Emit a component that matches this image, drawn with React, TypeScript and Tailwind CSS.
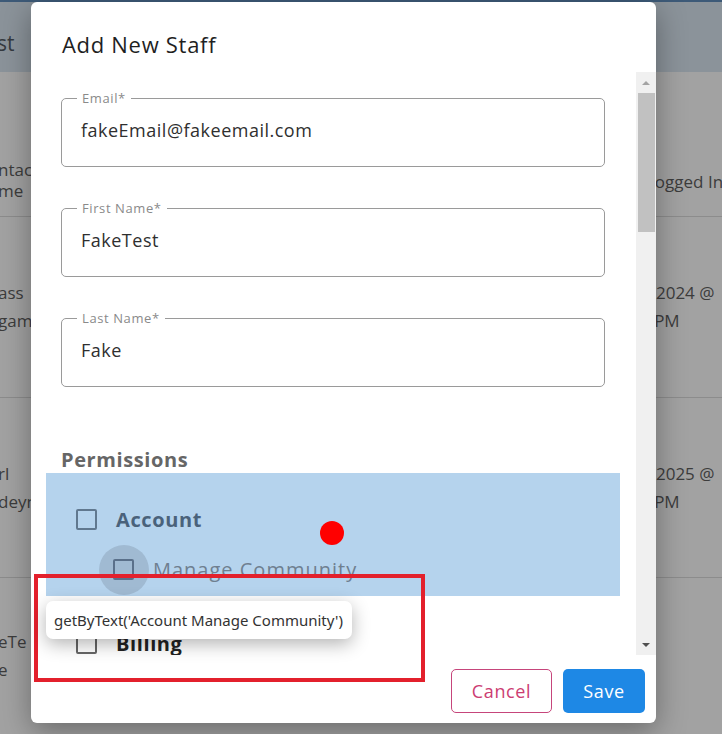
import React from "react";

const font = { fontFamily: '"Open Sans", "Noto Sans", sans-serif' };

const Field: React.FC<{ label: string; value: string }> = ({ label, value }) => (
  <div className="relative h-[69px] rounded-[5px] border border-[#9a9a9a] flex items-center pl-[19px]">
    <span className="absolute -top-[9px] left-[15px] px-[5px] bg-white text-[13px] leading-[16px] tracking-[0.6px] text-[#8a8a8a]">
      {label}
    </span>
    <span className="text-[18px] tracking-[0.5px] text-[#2f2f2f] -mt-[5px]">{value}</span>
  </div>
);

const Checkbox: React.FC<{ tone?: string }> = ({ tone = "border-[#666]" }) => (
  <span className={`block w-[21px] h-[21px] rounded-[2px] border-2 ${tone}`} />
);

const BgRow: React.FC<{ left: string[]; right: string[]; h: string; border?: boolean }> = ({
  left,
  right,
  h,
  border = true,
}) => (
  <div className={`flex ${h} ${border ? "border-b border-[#8c8c8c]" : ""}`}>
    <div className="w-[40px] overflow-hidden flex flex-col justify-center gap-[4px] text-[17px] leading-[24px] text-[#3c3c3c] -ml-[2px]">
      {left.map((t, i) => (
        <span key={i} className="whitespace-nowrap">
          {t}
        </span>
      ))}
    </div>
    <div className="flex-1" />
    <div className="w-[82px] overflow-hidden flex flex-col justify-center gap-[4px] text-[17px] leading-[24px] text-[#3c3c3c]">
      {right.map((t, i) => (
        <span key={i} className="whitespace-nowrap">
          {t}
        </span>
      ))}
    </div>
  </div>
);

export default function App() {
  return (
    <div className="relative w-[722px] h-[734px] overflow-hidden bg-[#a2a2a2]" style={font}>
      {/* page behind the modal */}
      <div className="flex flex-col h-full">
        <div className="h-[2px] bg-[#3d5a78]" />
        <div className="h-[70px] bg-[#8b939a] flex items-start pt-[27px]">
          <span className="text-[21px] leading-[28px] text-[#353a40] -ml-[3px]">st</span>
        </div>
        <div className="flex h-[145px] border-b border-[#8c8c8c]">
          <div className="w-[40px] overflow-hidden flex flex-col justify-end pb-[15px] text-[17px] leading-[21px] text-[#3c3c3c] -ml-[2px]">
            <span className="whitespace-nowrap">ntact</span>
            <span className="whitespace-nowrap">me</span>
          </div>
          <div className="flex-1" />
          <div className="w-[82px] overflow-hidden flex flex-col justify-end pb-[22px] pl-[6px] text-[17px] text-[#3c3c3c]">
            <span className="whitespace-nowrap">Logged In</span>
          </div>
        </div>
        <BgRow h="h-[181px]" left={["ass", "gam"]} right={["1/2024 @", "0 PM"]} />
        <BgRow h="h-[180px]" left={["rl", "deyn"]} right={["1/2025 @", "0 PM"]} />
        <BgRow h="flex-1" left={["eTe", "e"]} right={[]} border={false} />
      </div>

      {/* modal */}
      <div className="absolute left-[31px] top-[2px] w-[625px] h-[721px] bg-white rounded-[6px] shadow-[0_8px_30px_rgba(0,0,0,0.35)] flex flex-col overflow-hidden">
        <div className="h-[70px] pt-[27px] pl-[31px] text-[22px] leading-[30px] tracking-[0.7px] text-[#1f1f1f]">
          Add New Staff
        </div>

        <div className="flex-1 flex min-h-0">
          <div className="flex-1 overflow-hidden pl-[30px] pr-[31px] pt-[26px]">
            <div className="flex flex-col gap-[41px]">
              <Field label="Email*" value="fakeEmail@fakeemail.com" />
              <Field label="First Name*" value="FakeTest" />
              <Field label="Last Name*" value="Fake" />
            </div>

            <div className="mt-[60px] text-[20px] font-bold tracking-[0.6px] text-[#666] leading-[26px]">
              Permissions
            </div>

            <div className="-mx-[15px] h-[123px] bg-[#b5d3ed] pl-[30px] pt-[33px]">
              <div className="flex items-center gap-[19px] h-[27px]">
                <Checkbox tone="border-[#60788f]" />
                <span className="text-[20px] font-bold tracking-[0.6px] text-[#4a627b]">Account</span>
              </div>
              <div className="flex items-center mt-[23px] ml-[37px] gap-[19px] h-[27px]">
                <span className="relative flex items-center justify-center w-[21px] h-[21px]">
                  <span className="absolute w-[50px] h-[50px] rounded-full bg-[#a0bad2]" />
                  <span className="relative block w-[21px] h-[21px] rounded-[2px] border-2 border-[#5a708a]" />
                </span>
                <span className="text-[20px] tracking-[1px] text-[#6f7f90]">Manage Community</span>
              </div>
            </div>

            <div className="flex items-center gap-[19px] mt-[34px] pl-[15px] h-[27px]">
              <Checkbox />
              <span className="text-[20px] font-bold tracking-[0.6px] text-[#222]">Billing</span>
            </div>
          </div>

          {/* scrollbar */}
          <div className="w-[20px] bg-[#f0f0f0] flex flex-col items-center">
            <div className="h-[21px] flex items-center justify-center">
              <span className="block w-0 h-0 border-l-[4px] border-r-[4px] border-b-[4px] border-l-transparent border-r-transparent border-b-[#a3a3a3]" />
            </div>
            <div className="w-[17px] h-[139px] bg-[#c1c1c1]" />
            <div className="flex-1" />
            <div className="h-[21px] flex items-center justify-center">
              <span className="block w-0 h-0 border-l-[4px] border-r-[4px] border-t-[4px] border-l-transparent border-r-transparent border-t-[#505050]" />
            </div>
          </div>
        </div>

        <div className="h-[68px] flex items-start justify-end gap-[11px] pr-[11px] pt-[14px]">
          <button className="w-[101px] h-[44px] rounded-[5px] border border-[#c6457b] text-[#cc3d72] text-[18px] tracking-[0.6px]">
            Cancel
          </button>
          <button className="w-[82px] h-[44px] rounded-[5px] bg-[#1e88e5] text-white text-[18px] tracking-[0.6px] font-medium">
            Save
          </button>
        </div>
      </div>

      {/* test overlays */}
      <div className="absolute left-[320px] top-[521px] w-[24px] h-[24px] rounded-full bg-[#ff0000]" />
      <div className="absolute left-[34px] top-[574px] w-[391px] h-[108px] border-4 border-[#e3202c]" />
      <div
        className="absolute left-[46px] top-[601px] w-[306px] h-[38px] rounded-[7px] bg-white shadow-[0_5px_18px_rgba(0,0,0,0.3)] flex items-center pl-[8px] text-[15px] text-[#333]"
        style={{ fontFamily: '"Noto Sans", "Open Sans", sans-serif' }}
      >
        getByText('Account Manage Community')
      </div>
    </div>
  );
}
